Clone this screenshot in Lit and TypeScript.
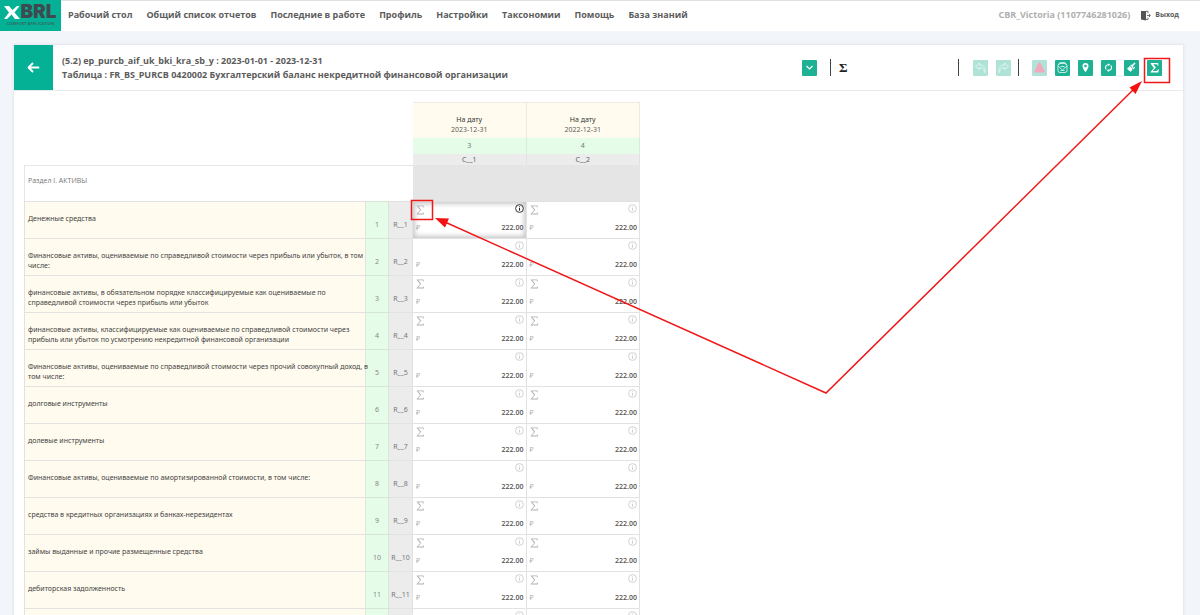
import { LitElement, html, svg, css, nothing } from "lit";
import { customElement } from "lit/decorators.js";

const MENU = ["Рабочий стол", "Общий список отчетов", "Последние в работе", "Профиль", "Настройки", "Таксономии", "Помощь", "База знаний"];

const ROWS: { label: string; sum: boolean }[] = [
  { label: "Денежные средства", sum: true },
  { label: "Финансовые активы, оцениваемые по справедливой стоимости через прибыль или убыток, в том\nчисле:", sum: false },
  { label: "финансовые активы, в обязательном порядке классифицируемые как оцениваемые по\nсправедливой стоимости через прибыль или убыток", sum: true },
  { label: "финансовые активы, классифицируемые как оцениваемые по справедливой стоимости через\nприбыль или убыток по усмотрению некредитной финансовой организации", sum: true },
  { label: "Финансовые активы, оцениваемые по справедливой стоимости через прочий совокупный доход, в\nтом числе:", sum: false },
  { label: "долговые инструменты", sum: true },
  { label: "долевые инструменты", sum: true },
  { label: "Финансовые активы, оцениваемые по амортизированной стоимости, в том числе:", sum: false },
  { label: "средства в кредитных организациях и банках-нерезидентах", sum: true },
  { label: "займы выданные и прочие размещенные средства", sum: true },
  { label: "дебиторская задолженность", sum: true },
  { label: "", sum: false },
];

const ICONS = {
  undo: svg`<path d="M6.500 3 2.500 6.300l4 3.200V7.600c3 0 4.700 1 5 4.900 2-4 0-7.500-5-7.600z" />`,
  redo: svg`<path d="M8.500 3l4 3.300-4 3.200V7.600c-3 0-4.700 1-5 4.900-2-4 0-7.500 5-7.600z" />`,
  alert: svg`<path class="pink" d="M7.500 2.500c.6 0 1 .4 1.300 1L12.600 11c.3.8 0 1.500-.8 1.500H3.200c-.8 0-1.100-.7-.8-1.500L6.200 3.500c.3-.6.7-1 1.300-1z" />`,
  check: svg`<path d="M4.500 4.500V3.500q0-1 1-1h4q1 0 1 1v1M3 5.500v5q0 2 2 2h5q2 0 2-2v-5q0-2-2-2H5q-2 0-2 2zM3 6l4.500 4L12 6M5.500 6.500h4M5.500 10.500h4" />`,
  pin: svg`<path class="solid" fill-rule="evenodd" d="M7.500 3a3 3 0 0 0-3 3c0 2.200 3 6.300 3 6.300s3-4.100 3-6.300a3 3 0 0 0-3-3zm0 1.700a1.300 1.300 0 1 1 0 2.600 1.300 1.300 0 0 1 0-2.600z" />`,
  sync: svg`<path class="bold" d="M5.200 9.500A2.900 2.900 0 0 1 7.500 4.700M9.800 5.500a2.900 2.900 0 0 1-2.300 4.900" /><path class="solid" d="M7.300 3.200l1.900 1.500-1.900 1.500zM7.700 8.900l-1.900 1.500 1.900 1.500z" />`,
  brush: svg`<path class="solid" d="M11.600 3.300 8.900 6.200l.8.8-.9.900-2.600-2.600.9-.9.700.7 2.800-2.600zM5.600 5.800l3 3c-.5 1.500-1.200 2.400-1.800 2.900C5 11 3.700 9.800 3 8l1.300.2-.5-1.100 1.400.3z" /><path class="bold" d="M9 9l1.800-1.800" />`,
  sigma: svg`<path class="solid" d="M3.700 3h7.400l.3 2.700h-.7c-.3-1.200-.7-1.500-1.800-1.500H6.200l2.700 3.300L5.700 11h3.400c1.200 0 1.600-.4 2-1.700h.7L11.300 12.500H3.500v-.6l3.400-3.800-3.200-4.300z" />`,
};

const TOOLS: { icon: keyof typeof ICONS; title: string; off?: boolean }[] = [
  { icon: "alert", title: "Ошибки", off: true },
  { icon: "check", title: "Проверка" },
  { icon: "pin", title: "Перейти" },
  { icon: "sync", title: "Обновить" },
  { icon: "brush", title: "Очистить" },
  { icon: "sigma", title: "Автосумма" },
];

@customElement("value-cell")
class ValueCell extends LitElement {
  static properties = { sum: { type: Boolean }, active: { type: Boolean }, empty: { type: Boolean }, label: {} };
  declare sum: boolean;
  declare active: boolean;
  declare empty: boolean;
  declare label: string;

  static styles = css`
    :host { display: block; }
    * { box-sizing: border-box; }
    .cell { height: 36px; padding: 2px 2px 0 3px; display: flex; flex-direction: column; gap: 6px; color: #b0b0b0; }
    .cell.active { box-shadow: inset 0 0 5px 2px rgba(0, 0, 0, 0.22); }
    .line { display: flex; justify-content: space-between; align-items: flex-start; height: 12px; }
    button { border: 0; padding: 0; margin: 0; background: none; display: block; color: #ccc; }
    .active .info { color: #222; }
    svg { display: block; fill: none; stroke: currentColor; }
    .sum { padding: 1px 0 0 0; color: #b0b0b0; }
    .sum svg { fill: currentColor; stroke: none; }
    .entry { align-items: center; }
    .cur { font-size: 7px; }
    input { width: 60px; border: 0; padding: 0; margin: 0; background: none; text-align: right; outline: 0;
      font: 600 7px/12px "Open Sans", sans-serif; color: #555; height: 12px; }
  `;

  render() {
    return html`<div class="cell ${this.active ? "active" : ""}">
      <div class="line">
        ${this.sum
          ? html`<button class="sum" aria-label="Сумма"><svg width="9" height="10" viewBox="0 0 9 10"><path d="M.8.500h6.700l.3 2h-.5C7 1.500 6.500 1.200 5.600 1.200H2.300l2.900 3.500L2 8.600h4c1 0 1.400-.4 1.800-1.400h.5L7.700 9.500H.7V9l3.400-3.900L.8 1z" /></svg></button>`
          : html`<span></span>`}
        <button class="info" aria-label="Информация"><svg width="9" height="9" viewBox="0 0 9 9"><circle cx="4.500" cy="4.500" r="3.900" stroke-width=".9" /><path d="M4.500 4v2.700M4.500 2.300v.9" /></svg></button>
      </div>
      ${this.empty ? nothing : html`<div class="line entry"><span class="cur">₽</span><input aria-label=${this.label} value="222.00" /></div>`}
    </div>`;
  }
}

@customElement("app-root")
class AppRoot extends LitElement {
  static styles = css`
    :host { display: block; position: relative; height: 100vh; overflow: hidden; background: #f2f5f9;
      font-family: "Open Sans", sans-serif; color: #5c5c5c; }
    * { box-sizing: border-box; }
    button { border: 0; padding: 0; margin: 0; font: inherit; }
    svg { display: block; }
    .top { display: flex; align-items: center; height: 31px; background: #fff; border-top: 1px solid #dfe2e2; padding-right: 21px; font-size: 9px; line-height: 12px; font-weight: 700; }
    .logo { width: 61px; height: 31px; margin-top: -1px; background: #05b195; display: flex; flex-direction: column; align-items: center; text-decoration: none; }
    .brand { display: flex; align-items: center; gap: 0; font: 900 19px/18px Inter, sans-serif; color: #3d4b50; padding-top: 3px; }
    .tag { font: 700 4px/5px "Open Sans", sans-serif; color: #2b6f68; white-space: nowrap; }
    nav { display: flex; gap: 14px; padding: 0 0 2px 7px; flex: 1; }
    nav a, .exit { color: #5c5c5c; text-decoration: none; white-space: nowrap; }
    .user { color: #b0b0b0; font-weight: 700; white-space: nowrap; padding-bottom: 2px; }
    .exit { display: flex; align-items: center; gap: 4px; margin-left: 10px; font-size: 7px; padding-bottom: 2px; }
    .card { margin: 14px 17px 0 14px; background: #fff; min-height: 100vh; box-shadow: 0 0 2px 1px #e2e5e9; }
    .head { display: flex; align-items: center; height: 46px; border-bottom: 1px solid #e8eaec; padding-right: 21px; }
    .back { width: 39px; height: 45px; background: #05b195; display: grid; place-items: center; }
    h1 { flex: 1; margin: 0; padding-left: 9px; font-size: 9px; line-height: 14px; font-weight: 700; white-space: nowrap; }
    .tools { display: flex; align-items: center; gap: 8px; }
    .sep { width: 1px; height: 17px; background: #444; }
    .tool { width: 15px; height: 16px; background: #1fb193; border-radius: 1px; display: grid; place-items: center; }
    .tool svg { fill: none; stroke: #e9fbf5; stroke-width: 0.8; }
    .tool .solid { fill: #fff; stroke: none; }
    .tool .bold { stroke: #fff; stroke-width: 1.1; }
    .tool .pink { fill: #f2a9bd; stroke: none; }
    .off { background: #b0e3d8; }
    .drop { margin-right: 5px; }
    .formula { display: flex; align-items: center; width: 111px; }
    .formula label { font: 700 13px/16px "Liberation Serif", serif; color: #222; }
    .formula input { flex: 1; min-width: 0; border: 0; background: none; padding: 0; height: 16px; outline: 0; }
    .undo { margin-left: 6px; }
    .endsep { margin: 0 5px 0 -1px; }
    .sheet { padding: 11px 10px 0; }
    table { width: 616px; table-layout: fixed; border-collapse: separate; border-spacing: 0; font-family: "Noto Sans", sans-serif; font-size: 7px; line-height: 10px; }
    td, th { padding: 0; font-weight: 400; border: 0 solid #e2e3e1; vertical-align: top; }
    .c-label { width: 342px; } .c-num { width: 23px; } .c-code { width: 24px; }
    .date { height: 36px; background: #fffbee; border-width: 1px 1px 0 0; border-color: #eceae2; padding-top: 12px; }
    .date b { font-weight: 400; color: #333; }
    .no { height: 16px; background: #e4fce8; border-right-width: 1px; border-color: #dbe9dd; line-height: 16px; color: #777; }
    .code { height: 11px; background: #ececec; border-right-width: 1px; line-height: 11px; }
    .section { height: 36px; text-align: left; padding: 10px 3px 0; border-width: 1px 0 0 1px; border-color: #e6e6e6; color: #777; font-family: "Open Sans", sans-serif; }
    .blank { background: #e5e5e5; }
    .label { height: 37px; text-align: left; background: #fffbee; border-width: 1px 1px 0 1px; padding: 12px 0 0 3px; color: #444; white-space: pre; }
    .num { background: #e4fce8; border-width: 1px 1px 0 0; border-color: #d7e4d8; text-align: center; padding-top: 18px; color: #888; }
    .rc { background: #ececec; border-width: 1px 1px 0 0; text-align: center; padding-top: 18px; color: #777; white-space: nowrap; }
    .val { border-width: 1px 1px 0 0; }
    .marks { position: absolute; left: 0; top: 0; pointer-events: none; fill: none; stroke: #f01818; stroke-width: 1.500; }
    .tip { fill: #f51111; stroke: none; }
  `;

  tool(icon: keyof typeof ICONS, title: string, off = false, extra = "") {
    return html`<button class="tool ${off ? "off" : ""} ${extra}" aria-label=${title}><svg width="15" height="15" viewBox="0 0 15 15">${ICONS[icon]}</svg></button>`;
  }

  render() {
    return html`
      <header class="top">
        <a class="logo" href="#" aria-label="XBRL">
          <span class="brand"><svg width="16" height="13" viewBox="0 0 16 13"><path fill="#fff" d="M0 0h5l3.500 4L13 0h2.500l-5 6.500L16 13h-5L7.500 8.500 3 13H0l5-6.500z" /></svg>BRL</span>
          <span class="tag">COMFORT APPLICATION</span>
        </a>
        <nav>${MENU.map((m) => html`<a href="#">${m}</a>`)}</nav>
        <span class="user">CBR_Victoria (1107746281026)</span>
        <a class="exit" href="#"><svg width="11" height="11" viewBox="0 0 11 11"><path fill="#555" d="M1 1h5v9.500L1 9.500z" /><path fill="none" stroke="#666" stroke-width=".9" d="M6 1.300h2v2M6 9.500h2v-2M7 5.500h3M9 4l1.500 1.500L9 7" /></svg>Выход</a>
      </header>
      <main class="card">
        <div class="head">
          <button class="back" aria-label="Назад"><svg width="13" height="11" viewBox="0 0 13 11"><path fill="none" stroke="#fff" stroke-width="1.800" stroke-linecap="round" stroke-linejoin="round" d="M11.500 5.500H1.500M5.500 1.500l-4 4 4 4" /></svg></button>
          <h1>(5.2) ep_purcb_aif_uk_bki_kra_sb_y : 2023-01-01 - 2023-12-31<br />Таблица : FR_BS_PURCB 0420002 Бухгалтерский баланс некредитной финансовой организации</h1>
          <div class="tools">
            <button class="tool drop" aria-label="Развернуть"><svg width="15" height="15" viewBox="0 0 15 15"><path class="bold" d="M4.500 6l3 3 3-3" /></svg></button>
            <span class="sep"></span>
            <div class="formula"><label for="formula">Σ</label><input id="formula" /></div>
            <span class="sep"></span>
            ${this.tool("undo", "Отменить", true, "undo")}${this.tool("redo", "Повторить", true)}
            <span class="sep endsep"></span>
            ${TOOLS.map((t) => this.tool(t.icon, t.title, t.off))}
          </div>
        </div>
        <div class="sheet">
          <table>
            <colgroup><col class="c-label" /><col class="c-num" /><col class="c-code" /><col /><col /></colgroup>
            <tr><td colspan="3"></td>${["2023-12-31", "2022-12-31"].map((d) => html`<th class="date"><b>На дату</b><br />${d}</th>`)}</tr>
            <tr><td colspan="3"></td><th class="no">3</th><th class="no">4</th></tr>
            <tr><td colspan="3"></td><th class="code">C__1</th><th class="code">C__2</th></tr>
            <tr><th class="section" colspan="3">Раздел I. АКТИВЫ</th><td class="blank" colspan="2"></td></tr>
            ${ROWS.map((r, i) => html`<tr>
              <th class="label">${r.label || nothing}</th><td class="num">${r.label ? i + 1 : nothing}</td><td class="rc">${r.label ? `R__${i + 1}` : nothing}</td>
              ${[1, 2].map((c) => html`<td class="val"><value-cell .sum=${r.sum} .empty=${!r.label} .active=${i === 0 && c === 1} .label=${`R__${i + 1} C__${c}`}></value-cell></td>`)}
            </tr>`)}
          </table>
        </div>
      </main>
      <svg class="marks" width="1200" height="615" viewBox="0 0 1200 615" aria-hidden="true">
        <path d="M411.500 200.500h21v19h-21zM1144.500 58.500h25v24h-25z" />
        <path d="M446 222.500 826 393 1134 89" />
        <path class="tip" d="M435 218l14 .500-4 9zM1142 81l-6.500 13-6-6.500z" />
      </svg>`;
  }
}
